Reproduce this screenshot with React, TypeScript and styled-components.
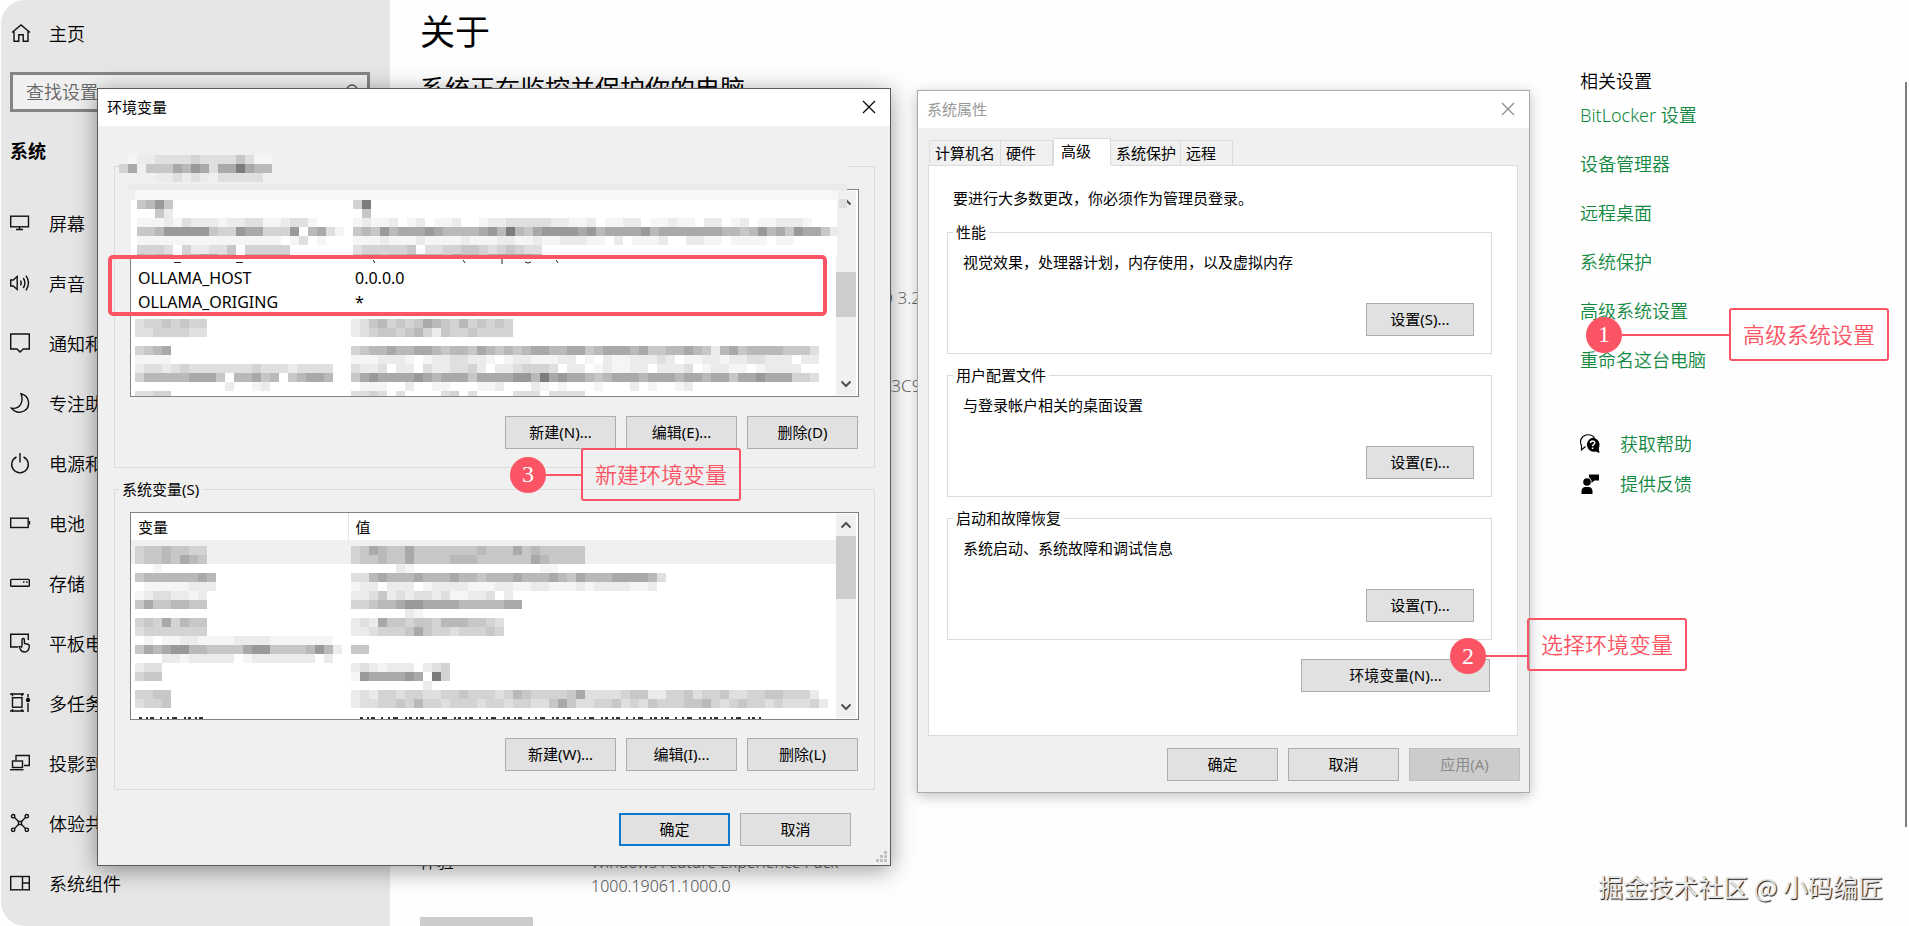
import React from 'react';
import styled, { createGlobalStyle, css } from 'styled-components';

const GlobalStyle = createGlobalStyle`
  *, *::before, *::after { box-sizing: border-box; }
  body { margin: 0; background: #fff; }
  button, input { font: inherit; color: inherit; }
`;

const red = '#fb5465';
const green = '#10893e';

/* ---------- page ---------- */

const Page = styled.div`
  position: relative;
  display: flex;
  height: 100vh;
  overflow: hidden;
  background: #fefefe;
  color: #000;
  font-family: 'Noto Sans', 'Noto Sans CJK SC', sans-serif;
  font-size: 15px;
`;

const Sidebar = styled.nav`
  flex: none;
  width: 389px;
  margin-left: 1px;
  padding-left: 9px;
  background: #e6e6e6;
  border-radius: 24px 0 0 24px;
  font-size: 18px;
  font-weight: 350;
`;

const NavLink = styled.a<{ $tall?: boolean }>`
  display: flex;
  align-items: center;
  gap: 19px;
  height: ${(p) => (p.$tall ? 66 : 60)}px;
  color: #000;
  text-decoration: none;
  white-space: nowrap;
`;

const NavList = styled.ul`
  margin: 0;
  padding: 0;
  list-style: none;
`;

const NavHeading = styled.h2`
  margin: 0 0 3px;
  font-size: 18px;
  line-height: 78px;
`;

const SearchBox = styled.div`
  display: flex;
  align-items: center;
  width: 360px;
  height: 40px;
  margin-top: 6px;
  padding: 0 8px 0 13px;
  border: 3px solid #858585;
  background: #f0f0f0;
`;

const SearchInput = styled.input`
  flex: 1;
  min-width: 0;
  padding: 0;
  border: 0;
  outline: 0;
  background: transparent;
  &::placeholder { color: #666; opacity: 1; }
`;

const Main = styled.main`
  flex: 1;
  min-width: 0;
  padding: 12px 0 0 30px;
  white-space: nowrap;
`;

const PageTitle = styled.h1`
  margin: 0;
  font-size: 35px;
  font-weight: 400;
  line-height: 40px;
`;

const PageSubtitle = styled.h2`
  margin: 18px 0 0;
  font-size: 25px;
  font-weight: 400;
  line-height: 36px;
`;

const SpecTail = styled.p<{ $gap: number }>`
  margin: ${(p) => p.$gap}px 0 0 461px;
  color: #666;
  font-size: 17px;
  font-weight: 350;
  line-height: 24px;
`;

const SpecRow = styled.dl`
  display: flex;
  margin: 452px 0 0;
  font-size: 17px;
  font-weight: 350;
  line-height: 24px;
`;

const SpecName = styled.dt`
  flex: none;
  width: 171px;
`;

const SpecValue = styled.dd`
  margin: 0;
  color: #555;
  font-size: 16px;
`;

const GreyButton = styled.button`
  display: block;
  width: 113px;
  height: 40px;
  margin-top: 19px;
  border: 0;
  background: #ccc;
`;

const Related = styled.aside`
  flex: none;
  display: flex;
  flex-direction: column;
  width: 325px;
  padding-top: 66px;
  font-size: 18px;
  font-weight: 350;
`;

const RelatedTitle = styled.h3`
  margin: 0 0 4px;
  font-size: 18px;
  font-weight: 350;
  line-height: 30px;
`;

const RelatedLinks = styled.div`
  display: flex;
  flex-direction: column;
  align-items: flex-start;
  gap: 19px;
  margin-bottom: 54px;
`;

const GreenLink = styled.a`
  display: flex;
  align-items: center;
  gap: 20px;
  color: ${green};
  line-height: 30px;
  text-decoration: none;
`;

const HelpLinks = styled.div`
  display: flex;
  flex-direction: column;
  align-items: flex-start;
  gap: 10px;
`;

const PageScroll = styled.div`
  flex: none;
  width: 2px;
  margin: 82px 2px 99px 0;
  background: #7f7f7f;
`;

const Watermark = styled.div`
  position: absolute;
  right: 26px;
  bottom: 21px;
  color: #e6e6e6;
  font-family: 'Noto Sans CJK SC', sans-serif;
  font-size: 25px;
  line-height: 38px;
  text-shadow: 1px 1px 1px #111;
`;

/* ---------- windows ---------- */

const Window = styled.section<{ $inactive?: boolean }>`
  position: absolute;
  background: #f0f0f0;
  ${(p) =>
    p.$inactive
      ? css`
          left: 917px;
          top: 90px;
          width: 613px;
          border: 1px solid #aaa;
          box-shadow: 0 3px 12px rgba(0, 0, 0, 0.25);
        `
      : css`
          left: 97px;
          top: 88px;
          width: 794px;
          border: 1px solid #5a5a5a;
          box-shadow: 0 4px 22px rgba(0, 0, 0, 0.4);
        `}
`;

const TitleBar = styled.header<{ $inactive?: boolean }>`
  display: flex;
  align-items: center;
  justify-content: space-between;
  height: 37px;
  padding: 0 9px 2px;
  background: #fff;
  color: ${(p) => (p.$inactive ? '#999' : '#000')};
`;

const WindowTitle = styled.h2`
  margin: 0;
  font-size: 15px;
  font-weight: 400;
`;

const CloseButton = styled.button`
  display: flex;
  padding: 5px;
  border: 0;
  background: transparent;
`;

const Button = styled.button<{ $width?: number; $primary?: boolean }>`
  flex: none;
  width: ${(p) => p.$width ?? 111}px;
  height: 33px;
  padding: 0 0 2px;
  border: ${(p) => (p.$primary ? '2px solid #0f78cf' : '1px solid #adadad')};
  background: #e1e1e1;
  font-size: 15px;
  &:disabled {
    border-color: #bfbfbf;
    background: #ccc;
    color: #8a8a8a;
  }
`;

const ButtonRow = styled.div<{ $top: number; $right?: number }>`
  display: flex;
  justify-content: flex-end;
  gap: 10px;
  margin-top: ${(p) => p.$top}px;
  padding-right: ${(p) => p.$right ?? 0}px;
`;

const EnvBody = styled.div`
  padding: 28px 15px 19px 16px;
`;

const Group = styled.fieldset`
  min-width: 0;
  margin: 0;
  padding: 0 15px 18px;
  border: 1px solid #dcdcdc;
  & + & { margin-top: 9px; }
`;

const Legend = styled.legend`
  height: 24px;
  margin-left: -11px;
  padding: 0 3px;
  line-height: 24px;
`;

const BlurredLegend = styled.legend`
  height: 24px;
  width: 728px;
  margin-left: -11px;
  padding: 1px 0 0;
`;

const ListBox = styled.div`
  position: relative;
  display: flex;
  height: 208px;
  margin-top: 11px;
  border: 1px solid #828282;
  background: #fff;
`;

const ListView = styled.div<{ $top?: number }>`
  flex: 1;
  min-width: 0;
  padding-top: ${(p) => p.$top ?? 0}px;
  overflow: hidden;
`;

const Veil = styled.div`
  position: absolute;
  left: -12px;
  top: -6px;
  display: flex;
`;

const Table = styled.table`
  width: 100%;
  border-collapse: collapse;
  table-layout: fixed;
`;

const HeadCell = styled.th<{ $name?: boolean }>`
  width: ${(p) => (p.$name ? '217px' : 'auto')};
  height: 27px;
  padding: 0 7px;
  border-right: ${(p) => (p.$name ? '1px solid #e5e5e5' : '0')};
  font-weight: 400;
  text-align: left;
`;

const Cell = styled.td<{ $name?: boolean }>`
  width: ${(p) => (p.$name ? '217px' : 'auto')};
  height: 24px;
  padding: 0 7px;
  font-size: 16px;
  line-height: 22px;
  white-space: nowrap;
`;

const BlurredCell = styled.td`
  padding: 0;
`;

const ScrollTrack = styled.div`
  display: flex;
  flex: none;
  flex-direction: column;
  align-items: center;
  width: 20px;
  margin: 1px 2px 1px 0;
  background: #f0f0f0;
`;

const ScrollArrow = styled.button`
  display: flex;
  align-items: center;
  justify-content: center;
  width: 20px;
  height: 22px;
  padding: 0;
  border: 0;
  background: transparent;
`;

const ScrollThumb = styled.div<{ $top: number; $height: number }>`
  width: 20px;
  height: ${(p) => p.$height}px;
  margin: ${(p) => p.$top}px 0 auto;
  background: #cdcdcd;
`;

const Grip = styled.div`
  position: absolute;
  right: 2px;
  bottom: 2px;
  display: flex;
`;

const Highlight = styled.div`
  position: absolute;
  left: 108px;
  top: 255px;
  width: 719px;
  height: 61px;
  border: 4px solid ${red};
  border-radius: 5px;
`;

/* ---------- system properties ---------- */

const PropsBody = styled.div`
  padding: 10px 9px 11px 10px;
`;

const Tabs = styled.div`
  display: flex;
  align-items: flex-end;
  height: 28px;
  margin: 0 0 -1px 1px;
`;

const Tab = styled.button<{ $width: number; $active?: boolean }>`
  position: relative;
  width: ${(p) => p.$width}px;
  height: ${(p) => (p.$active ? 28 : 26)}px;
  padding: ${(p) => (p.$active ? '0 0 4px 7px' : '0 0 1px 5px')};
  border: 1px solid #dcdcdc;
  border-left-width: ${(p) => (p.$active ? 1 : 0)}px;
  border-bottom-color: ${(p) => (p.$active ? '#fff' : '#dcdcdc')};
  background: ${(p) => (p.$active ? '#fff' : '#f0f0f0')};
  font-size: 15px;
  text-align: left;
  white-space: nowrap;
  &:first-child { border-left-width: 1px; }
`;

const TabPanel = styled.div`
  margin-right: 2px;
  padding: 20px 25px 43px 18px;
  border: 1px solid #dcdcdc;
  background: #fff;
`;

const Notice = styled.p`
  margin: 0 0 10px 6px;
  line-height: 24px;
`;

const Section = styled.fieldset`
  min-width: 0;
  margin: 0;
  padding: 0 17px 17px 15px;
  border: 1px solid #dcdcdc;
  & + & { margin-top: 9px; }
`;

const SectionLegend = styled.legend`
  height: 24px;
  margin-left: -10px;
  padding: 0 3px;
  line-height: 24px;
`;

const SectionText = styled.p`
  margin: 6px 0 0;
  line-height: 24px;
`;

/* ---------- callouts ---------- */

const CalloutWrap = styled.div<{ $x: number; $y: number }>`
  position: absolute;
  left: ${(p) => p.$x}px;
  top: ${(p) => p.$y}px;
  display: flex;
  align-items: center;
`;

const Marker = styled.div<{ $drop: number }>`
  display: flex;
  align-items: center;
  margin-top: ${(p) => p.$drop}px;
`;

const Badge = styled.span`
  display: flex;
  align-items: center;
  justify-content: center;
  width: 36px;
  height: 36px;
  border-radius: 50%;
  background: ${red};
  color: #fff;
  font-family: 'Liberation Serif', serif;
  font-size: 24px;
`;

const Lead = styled.span<{ $length: number }>`
  width: ${(p) => p.$length}px;
  height: 2px;
  background: ${red};
`;

const CalloutBox = styled.span`
  padding: 0 12px 1px;
  border: 2px solid ${red};
  border-radius: 3px;
  color: ${red};
  font-size: 22px;
  font-weight: 350;
  line-height: 48px;
  white-space: nowrap;
`;

function Callout(p: { x: number; y: number; n: number; lead: number; drop?: number; label: string }) {
  return (
    <CalloutWrap $x={p.x} $y={p.y}>
      <Marker $drop={p.drop ?? 0}>
        <Badge>{p.n}</Badge>
        <Lead $length={p.lead} />
      </Marker>
      <CalloutBox>{p.label}</CalloutBox>
    </CalloutWrap>
  );
}

/* ---------- pixelated areas ---------- */

const shades = ['', '#f5f5f5', '#ebebeb', '#dfdfdf', '#d3d3d3', '#c7c7c7', '#b9b9b9', '#a9a9a9', '#999999', '#7c7c7c'];

/* Every character is one 9px block; a digit gives its darkness. */
function Blocks({ rows, x, y }: { rows: string[]; x: number; y: number }) {
  return (
    <g transform={`translate(${x} ${y})`} shapeRendering="crispEdges">
      {rows.map((row, r) =>
        row.split('').map((c, i) =>
          c >= '1' && c <= '9' ? (
            <rect key={`${r}-${i}`} x={i * 9} y={r * 9} width={9} height={9} fill={shades[Number(c)]} />
          ) : null,
        ),
      )}
    </g>
  );
}

const line = (name: string, value: string) => name.padEnd(24, '.') + value;

const legendRows = ['.1223333433335311', '47.55576873779766', '....223232.33333.'];

const userTop = [
  line('5685', '49'),
  line('..52', '.5'),
  line('11121322212233112331', '12112.12.112..1223333322112.1122.11211.22.12.112221'),
  line('556888885448774448.6731', '565867778766667869657888878677778677777776656867587752'),
  line('1111111111111111.13.1', '1112111211112111221121122211.2.1112..2211.1111.11'),
  line('4443.422335.44444', '3444445.3344554345433'),
  line('6566.567756.66666', '566566766657665777776'),
];

const userBottom = [
  line('34454544', '235645457654645454'),
  line('33444433', '234554564254454444'),
  line('', ''),
  line('4567', '4566766776566576565677667756777675566765267566665553'),
  line('1111', '1112221.12233221.12211122.1.21122232.112212233222.22'),
  line('2332343333333433323333', '3223.22.3223342.2234443.22.121122.2223.12211.12222'),
  line('4666667775.66756.56776', '5787777876777577778869787765677767776776775778777443'),
  line('..........2..12', '.111..2..11...112...21.1...1...2.1..12'),
  line('3344', '3343.3....34.3....333.3333'),
];

const systemRows = [
  line('45565544', '45765575555555655575655555'),
  line('45565765', '45565575555666555555765555'),
  line('..1..', '.....21..............11...'),
  line('566666676', '33676667666766566676667657666777763'),
  line('.11111222', '122.222.12222111221122111212222112'),
  line('12332212', '2235232332311223.2'),
  line('57556655', '4456678877776666677'),
  line('........', '......21..........'),
  line('45474655', '23275545546665543'),
  line('34444444', '22344457544344454'),
  line('.1.1122111122221111111', ''),
  line('57678866555578855556862', '55'),
  line('...22122222.12222222.2', ''),
  line('233', '2321222.234'),
  line('455', '18777787.94'),
  line('', '........2'),
  line('4455', '2324434433445444346544445733334552244534453344554442'),
  line('3445', '23344546443444344344335753344534354445564345443433342'),
];

/* ---------- icons ---------- */

const Icon = styled.svg.attrs({ width: 20, height: 20, viewBox: '0 0 20 20', 'aria-hidden': true })`
  flex: none;
  overflow: visible;
  fill: none;
  stroke: #111;
  stroke-width: 1.4;
`;

const navItems: { label: string; icon: React.ReactNode }[] = [
  {
    label: '屏幕',
    icon: (
      <>
        <rect x="0.7" y="3.2" width="17.8" height="10.6" />
        <path d="M9.5 14v2.3M6 16.5h7" />
      </>
    ),
  },
  {
    label: '声音',
    icon: (
      <>
        <path d="M.7 7v6h2.5l4 3.5v-13L3.200 7z" />
        <path d="M10.500 7.500q1.600 2.500 0 5M13.300 5q3.200 5 0 10M16 2.700q5 7.300 0 14.600" />
      </>
    ),
  },
  { label: '通知和操作', icon: <path d="M.7 1h18.600v15h-6L10 19l-3-3H.7z" /> },
  { label: '专注助手', icon: <path d="M11 .8C20 3 21 14 14 18 9.500 20.500 4 19 1.300 15.200 10 16.500 14 9 11 .8z" /> },
  { label: '电源和睡眠', icon: <path d="M10 0v9.500M6.500 4a8.300 8.300 0 1 0 7 0" /> },
  {
    label: '电池',
    icon: (
      <>
        <rect x="0.7" y="5.200" width="17.500" height="9.300" />
        <path d="M19.500 8v3.500" />
      </>
    ),
  },
  {
    label: '存储',
    icon: (
      <>
        <rect x="0.7" y="6.400" width="18.600" height="6.800" rx="0.8" />
        <path d="M13 9h1.500M16 9h1.500" />
      </>
    ),
  },
  {
    label: '平板电脑',
    icon: (
      <>
        <path d="M8 14H.7V1.300h17.600V7" />
        <path d="M12 13.500V7q0-1.500 1.200-1.500T14.400 7v3.500l3.600.8q1.500.4 1.300 2-.3 5.700-4.800 5.700-2.500 0-3.800-2l-1.700-3.300q1.300-1 3 1" />
      </>
    ),
  },
  {
    label: '多任务处理',
    icon: (
      <>
        <path d="M2.500 0v3.300M0 1h14M12 0v3.300M0 18h14" />
        <rect x="2.500" y="4.700" width="9.500" height="9.500" />
        <path d="M2.500 16v3M12 16v3M18 1v3.500M18 10v9" />
        <circle cx="18" cy="7" r="1.500" fill="#111" />
      </>
    ),
  },
  {
    label: '投影到此电脑',
    icon: (
      <>
        <path d="M6 7.500V2.500h13.300v10H14" />
        <rect x="2.500" y="8" width="10" height="6.500" />
        <path d="M0 16.700h13.500" />
      </>
    ),
  },
  {
    label: '体验共享',
    icon: (
      <>
        <path d="M4 4l5 5M16 4l-5 5M4 16l5-5M16 16l-5-5" />
        <circle cx="3.200" cy="3.200" r="1.700" />
        <circle cx="16.800" cy="3.200" r="1.700" />
        <circle cx="3.200" cy="16.800" r="1.700" />
        <circle cx="16.800" cy="16.800" r="1.700" />
        <rect x="8.500" y="8.500" width="3" height="3" />
      </>
    ),
  },
  {
    label: '系统组件',
    icon: (
      <>
        <rect x="0.7" y="3.500" width="18.600" height="13.300" />
        <path d="M12.500 3.500v13.300M12.500 10h6.800" />
      </>
    ),
  },
];

const CloseIcon = ({ color }: { color: string }) => (
  <svg width="14" height="14" viewBox="0 0 14 14" aria-hidden>
    <path d="M1 1l12 12M13 1L1 13" stroke={color} strokeWidth="1.200" />
  </svg>
);

const Chevron = ({ down }: { down?: boolean }) => (
  <svg width="12" height="8" viewBox="0 0 12 8" aria-hidden>
    <path d={down ? 'M1.500 1.500L6 6l4.500-4.500' : 'M1.500 6.500L6 2l4.500 4.500'} fill="none" stroke="#505050" strokeWidth="2" />
  </svg>
);

function Scrollbar({ top, height }: { top: number; height: number }) {
  return (
    <ScrollTrack>
      <ScrollArrow aria-label="向上滚动"><Chevron /></ScrollArrow>
      <ScrollThumb $top={top} $height={height} />
      <ScrollArrow aria-label="向下滚动"><Chevron down /></ScrollArrow>
    </ScrollTrack>
  );
}

/* ---------- windows' contents ---------- */

function EnvironmentWindow() {
  return (
    <Window aria-label="环境变量">
      <TitleBar>
        <WindowTitle>环境变量</WindowTitle>
        <CloseButton aria-label="关闭"><CloseIcon color="#000" /></CloseButton>
      </TitleBar>
      <EnvBody>
        <Group>
          <BlurredLegend>
            <svg width="728" height="27" aria-hidden>
              <Blocks rows={legendRows} x={0} y={0} />
            </svg>
          </BlurredLegend>
          <ListBox>
            <ListView $top={76}>
              <Table>
                <tbody>
                  <tr><Cell $name>OLLAMA_HOST</Cell><Cell>0.0.0.0</Cell></tr>
                  <tr><Cell $name>OLLAMA_ORIGING</Cell><Cell>*</Cell></tr>
                </tbody>
              </Table>
              <svg width="705" height="82" aria-hidden>
                <Blocks rows={userBottom} x={4} y={5} />
              </svg>
            </ListView>
            <Scrollbar top={59} height={45} />
            <Veil>
              <svg width="728" height="80" viewBox="0 0 728 80" aria-hidden>
                <rect width="728" height="74" fill="#f0f0f0" />
                <rect x="9" width="719" height="6" fill="#eaeaea" />
                <rect x="16" y="6" width="703" height="10" fill="#f7f7f7" />
                <rect x="12" y="16" width="706" height="58" fill="#fff" />
                <rect x="720" y="15" width="8" height="9" fill="#dedede" />
                <svg width="728" height="73">
                  <Blocks rows={userTop} x={18} y={16} />
                </svg>
                <path d="M55 78.500h7M117 78.500h7M254 76l2 3M344 76l2 3M383 75v5M406 78q3 2 6 0M437 76l2 3" fill="none" stroke="#222" />
              </svg>
            </Veil>
          </ListBox>
          <ButtonRow $top={19} $right={1}>
            <Button>新建(N)...</Button>
            <Button>编辑(E)...</Button>
            <Button>删除(D)</Button>
          </ButtonRow>
        </Group>
        <Group>
          <Legend>系统变量(S)</Legend>
          <ListBox>
            <ListView>
              <Table>
                <thead>
                  <tr><HeadCell $name>变量</HeadCell><HeadCell>值</HeadCell></tr>
                </thead>
                <tbody>
                  <tr>
                    <BlurredCell colSpan={2}>
                      <svg width="705" height="179" aria-hidden display="block">
                        <rect width="705" height="24" fill="#f0f0f0" />
                        <Blocks rows={systemRows} x={4} y={6} />
                        <path
                          d="M8 178h64M229 178h402"
                          stroke="#333"
                          strokeWidth="2"
                          strokeDasharray="3 4 2 2 4 6 2 5 2 3 5 7 2 2"
                        />
                      </svg>
                    </BlurredCell>
                  </tr>
                </tbody>
              </Table>
            </ListView>
            <Scrollbar top={0} height={63} />
          </ListBox>
          <ButtonRow $top={18} $right={1}>
            <Button>新建(W)...</Button>
            <Button>编辑(I)...</Button>
            <Button>删除(L)</Button>
          </ButtonRow>
        </Group>
        <ButtonRow $top={23} $right={24}>
          <Button $primary>确定</Button>
          <Button>取消</Button>
        </ButtonRow>
      </EnvBody>
      <Grip>
        <svg width="12" height="12" fill="#bfbfbf" aria-hidden>
          <path d="M8 0h3v3h-3zM4 4h3v3h-3zM8 4h3v3h-3zM0 8h3v3h-3zM4 8h3v3h-3zM8 8h3v3h-3z" />
        </svg>
      </Grip>
    </Window>
  );
}

const tabs = [
  { label: '计算机名', width: 72 },
  { label: '硬件', width: 52 },
  { label: '高级', width: 58, active: true },
  { label: '系统保护', width: 70 },
  { label: '远程', width: 52 },
];

const sections = [
  { title: '性能', text: '视觉效果，处理器计划，内存使用，以及虚拟内存', button: '设置(S)...' },
  { title: '用户配置文件', text: '与登录帐户相关的桌面设置', button: '设置(E)...' },
  { title: '启动和故障恢复', text: '系统启动、系统故障和调试信息', button: '设置(T)...' },
];

function PropertiesWindow() {
  return (
    <Window $inactive aria-label="系统属性">
      <TitleBar $inactive>
        <WindowTitle>系统属性</WindowTitle>
        <CloseButton aria-label="关闭"><CloseIcon color="#8c8c8c" /></CloseButton>
      </TitleBar>
      <PropsBody>
        <Tabs role="tablist">
          {tabs.map((t) => (
            <Tab key={t.label} role="tab" aria-selected={!!t.active} $width={t.width} $active={t.active}>
              {t.label}
            </Tab>
          ))}
        </Tabs>
        <TabPanel role="tabpanel">
          <Notice>要进行大多数更改，你必须作为管理员登录。</Notice>
          {sections.map((s) => (
            <Section key={s.title}>
              <SectionLegend>{s.title}</SectionLegend>
              <SectionText>{s.text}</SectionText>
              <ButtonRow $top={29}>
                <Button $width={108}>{s.button}</Button>
              </ButtonRow>
            </Section>
          ))}
          <ButtonRow $top={19} $right={2}>
            <Button $width={189}>环境变量(N)...</Button>
          </ButtonRow>
        </TabPanel>
        <ButtonRow $top={12}>
          <Button>确定</Button>
          <Button>取消</Button>
          <Button disabled>应用(A)</Button>
        </ButtonRow>
      </PropsBody>
    </Window>
  );
}

const relatedLinks = ['BitLocker 设置', '设备管理器', '远程桌面', '系统保护', '高级系统设置', '重命名这台电脑'];

export default function App() {
  return (
    <Page>
      <GlobalStyle />
      <Sidebar>
        <NavLink href="#" $tall>
          <Icon>
            <path d="M2 9.500L11 2l9 7.500M4 8v10.300h4.800v-6.500h4.400v6.500H18V8" />
          </Icon>
          主页
        </NavLink>
        <SearchBox>
          <SearchInput type="text" aria-label="查找设置" placeholder="查找设置" />
          <svg width="16" height="16" viewBox="0 0 16 16" fill="none" stroke="#555" strokeWidth="1.400" aria-hidden>
            <circle cx="9" cy="6" r="5" />
            <path d="M5.500 9.500L1 14" />
          </svg>
        </SearchBox>
        <NavHeading>系统</NavHeading>
        <NavList>
          {navItems.map((n) => (
            <li key={n.label}>
              <NavLink href="#">
                <Icon>{n.icon}</Icon>
                {n.label}
              </NavLink>
            </li>
          ))}
        </NavList>
      </Sidebar>
      <Main>
        <PageTitle>关于</PageTitle>
        <PageSubtitle>系统正在监控并保护你的电脑</PageSubtitle>
        <SpecTail $gap={180}>D 3.2</SpecTail>
        <SpecTail $gap={64}>A3C9</SpecTail>
        <SpecRow>
          <SpecName>体验</SpecName>
          <SpecValue>
            Windows Feature Experience Pack
            <br />
            1000.19061.1000.0
          </SpecValue>
        </SpecRow>
        <GreyButton aria-label="复制" />
      </Main>
      <Related>
        <RelatedTitle>相关设置</RelatedTitle>
        <RelatedLinks>
          {relatedLinks.map((l) => (
            <GreenLink key={l} href="#">{l}</GreenLink>
          ))}
        </RelatedLinks>
        <HelpLinks>
          <GreenLink href="#">
            <svg width="20" height="20" viewBox="0 0 20 20" aria-hidden>
              <path d="M5.500 12.500L1.500 16v-4.500C-.5 8 .5 2.500 6 1c4-.8 7 .6 8.500 3" fill="none" stroke="#000" strokeWidth="1.200" />
              <path d="M12.500 3.800a7 7 0 0 1 6.200 10.300l.8 5-4-1.500A7 7 0 1 1 12.500 3.800z" fill="#000" />
              <path d="M10.500 9q0-2 2.100-2t2.100 1.800q0 1.200-1.200 1.800-.9.500-.9 1.600M12.600 13.500v1.500" fill="none" stroke="#fff" strokeWidth="1.500" />
            </svg>
            获取帮助
          </GreenLink>
          <GreenLink href="#">
            <svg width="20" height="20" viewBox="0 0 20 20" aria-hidden>
              <circle cx="7" cy="8" r="3.800" />
              <path d="M1.500 20v-2.500q0-4.500 4-4.500h3q4 0 4 4.500V20zM9 .500h10v6h-4.500L11.500 9V6.500L9 3z" />
            </svg>
            提供反馈
          </GreenLink>
        </HelpLinks>
      </Related>
      <PageScroll />
      <PropertiesWindow />
      <EnvironmentWindow />
      <Highlight />
      <Callout x={1586} y={308} n={1} lead={107} label="高级系统设置" />
      <Callout x={1450} y={614} n={2} lead={41} drop={24} label="选择环境变量" />
      <Callout x={510} y={448} n={3} lead={35} label="新建环境变量" />
      <Watermark>掘金技术社区 @ 小码编匠</Watermark>
    </Page>
  );
}
